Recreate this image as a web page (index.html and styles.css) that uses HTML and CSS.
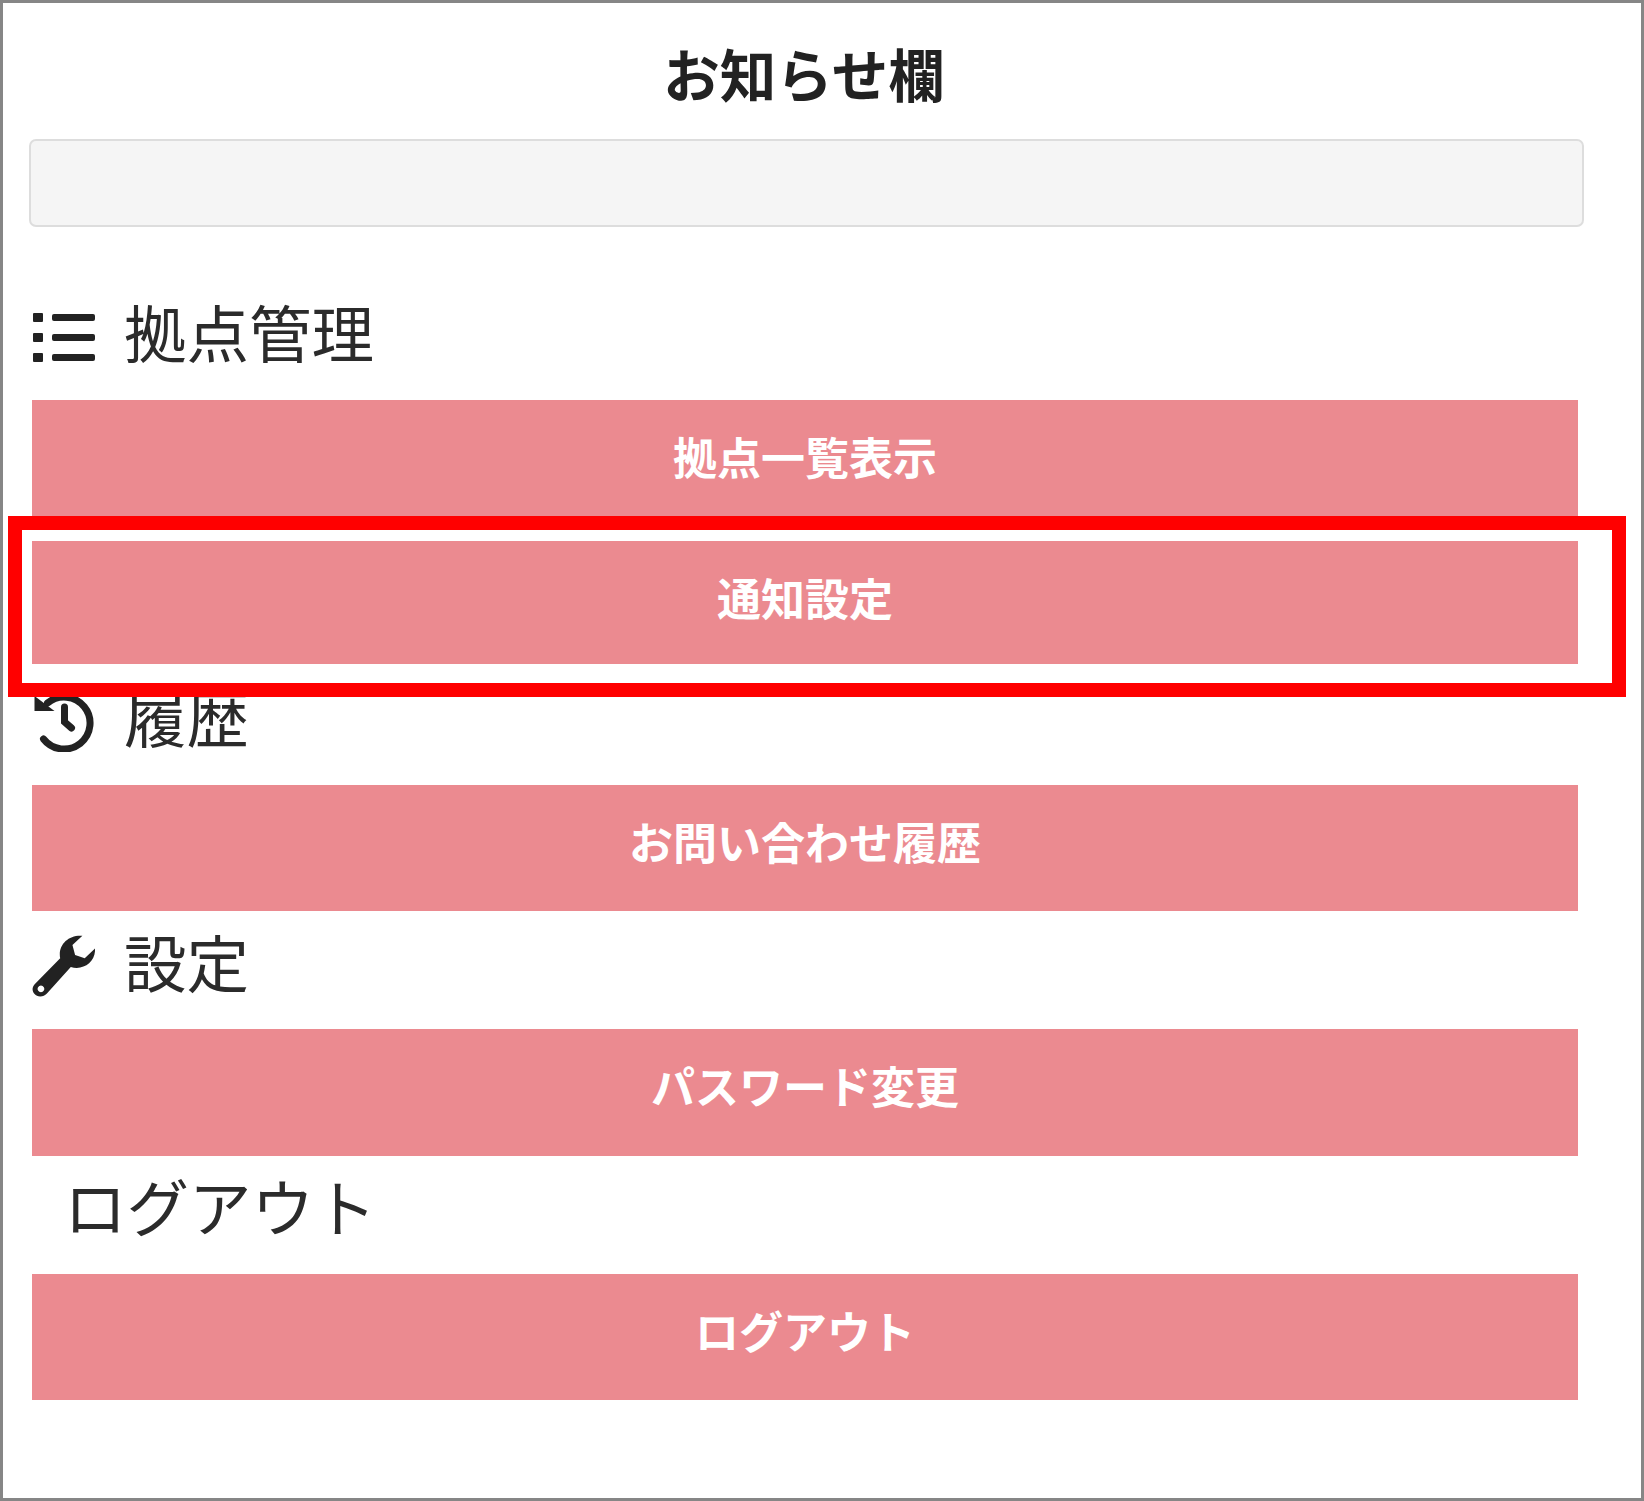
FILE: index.html
```html
<!DOCTYPE html>
<html lang="ja">
<head>
  <meta charset="UTF-8" />
  <title>お知らせ欄</title>
  <link rel="stylesheet" href="styles.css">
</head>
<body>
  <div class="frame">
    <h1 class="title">お知らせ欄</h1>
    <div class="notice-well"></div>

    <h2 class="section section-first">
      <svg class="icon icon-list" viewBox="0 0 63 50">
        <rect x="1" y="1" width="10" height="9" rx="1"/>
        <rect x="1" y="21" width="10" height="9" rx="1"/>
        <rect x="1" y="41" width="10" height="9" rx="1"/>
        <rect x="20" y="2" width="43" height="7" rx="2"/>
        <rect x="20" y="22" width="43" height="7" rx="2"/>
        <rect x="20" y="42" width="43" height="7" rx="2"/>
      </svg>
      拠点管理
    </h2>
    <a class="menu-btn">拠点一覧表示</a>
    <a class="menu-btn menu-btn-second">通知設定</a>

    <h2 class="section">
      <svg class="icon" viewBox="0 0 62 62">
        <path class="icon-line" d="M15 13a26 26 0 1 1-4 36"/>
        <path d="M2 6v15h20z"/>
        <path class="icon-line" d="M32 17v15l7 6"/>
      </svg>
      履歴
    </h2>
    <a class="menu-btn">お問い合わせ履歴</a>

    <h2 class="section">
      <svg class="icon" viewBox="95 100 190 186">
        <path fill-rule="evenodd" d="M247 102C205 98 172 130 180 170L103 248C90 262 98 284 120 285C128 285 134 282 140 276L212 196C250 208 288 180 285 140L254 170L225 160L217 130ZM122 252a10 10 0 1 0 .01 0z"/>
      </svg>
      設定
    </h2>
    <a class="menu-btn">パスワード変更</a>

    <h2 class="section section-plain">ログアウト</h2>
    <a class="menu-btn">ログアウト</a>

    <div class="callout"></div>
  </div>
</body>
</html>
```

FILE: styles.css
```css
html,
body {
  margin: 0;
  padding: 0;
  background: #fff;
}
body {
  font-family: "Liberation Sans", "Noto Sans CJK JP", sans-serif;
  color: #333;
}
.frame {
  position: relative;
  box-sizing: border-box;
  width: 1644px;
  height: 1501px;
  border: 3px solid #868686;
  padding: 0 57px 0 29px;
}
.title {
  margin: 0;
  height: 136px;
  padding-right: 8px;
  line-height: 150px;
  font-size: 56.5px;
  font-weight: bold;
  text-align: center;
  color: #222;
}
.notice-well {
  box-sizing: border-box;
  width: 1555px;
  margin-left: -3px;
  height: 88px;
  background: #f5f5f5;
  border: 2px solid #ddd;
  border-radius: 7px;
}
.section {
  box-sizing: border-box;
  display: flex;
  align-items: center;
  gap: 29px;
  height: 118px;
  margin: 0;
  padding-bottom: 9px;
  font-size: 62.5px;
  font-weight: normal;
  line-height: 1;
  color: #2b2b2b;
}
.section-first {
  margin-top: 55px;
}
.section-plain {
  padding-left: 32px;
}
.icon {
  width: 63px;
  height: 62px;
  flex: none;
  fill: #222;
}
.icon-list {
  height: 50px;
}
.icon-line {
  fill: none;
  stroke: #222;
  stroke-width: 7;
  stroke-linecap: round;
}
.menu-btn {
  display: block;
  width: 1546px;
  height: 126.4px;
  line-height: 120px;
  background: #eb8a90;
  color: #fff;
  font-size: 44px;
  font-weight: bold;
  text-align: center;
}
.menu-btn-second {
  margin-top: 14.6px;
  height: 123px;
  margin-bottom: 3px;
}
.callout {
  position: absolute;
  left: 5px;
  top: 513px;
  width: 1618px;
  height: 181px;
  box-sizing: border-box;
  border: 14px solid #f00;
}
```
